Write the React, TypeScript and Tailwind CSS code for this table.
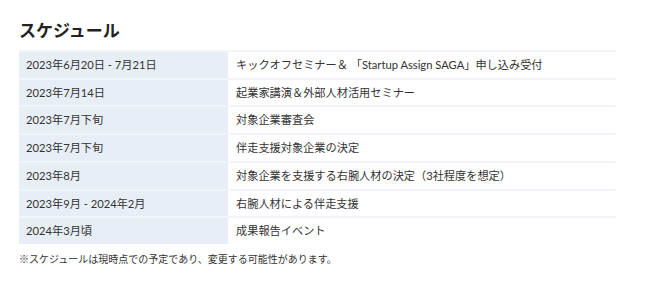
const rows = [
  ["2023年6月20日 - 7月21日", "キックオフセミナー＆ 「Startup Assign SAGA」申し込み受付"],
  ["2023年7月14日", "起業家講演＆外部人材活用セミナー"],
  ["2023年7月下旬", "対象企業審査会"],
  ["2023年7月下旬", "伴走支援対象企業の決定"],
  ["2023年8月", "対象企業を支援する右腕人材の決定（3社程度を想定）"],
  ["2023年9月 - 2024年2月", "右腕人材による伴走支援"],
  ["2024年3月頃", "成果報告イベント"],
];

export default function App() {
  return (
    <main
      className="w-[650px] h-[293px] bg-white text-[#333] px-[19px] pt-[19px]"
      style={{ fontFamily: 'Lato, "Noto Sans CJK JP", sans-serif' }}
    >
      <h2 className="text-[17px] font-bold leading-[23px] text-[#222] mb-[8px]">スケジュール</h2>
      <div className="w-[597px] flex flex-col">
        {rows.map(([date, label], i) => (
          <div key={i} className="flex border-t-2 border-[#f1f5f9]">
            <div className="w-[209px] shrink-0 bg-[#e8eef6] px-[7px] py-[5px] text-[11.2px] leading-[15.7px]">
              {date}
            </div>
            <div className="flex-1 px-[8px] py-[5px] text-[11.2px] leading-[15.7px]">{label}</div>
          </div>
        ))}
      </div>
      <p className="mt-[8px] text-[10px] leading-[14px] text-[#333]">
        ※スケジュールは現時点での予定であり、変更する可能性があります。
      </p>
    </main>
  );
}
